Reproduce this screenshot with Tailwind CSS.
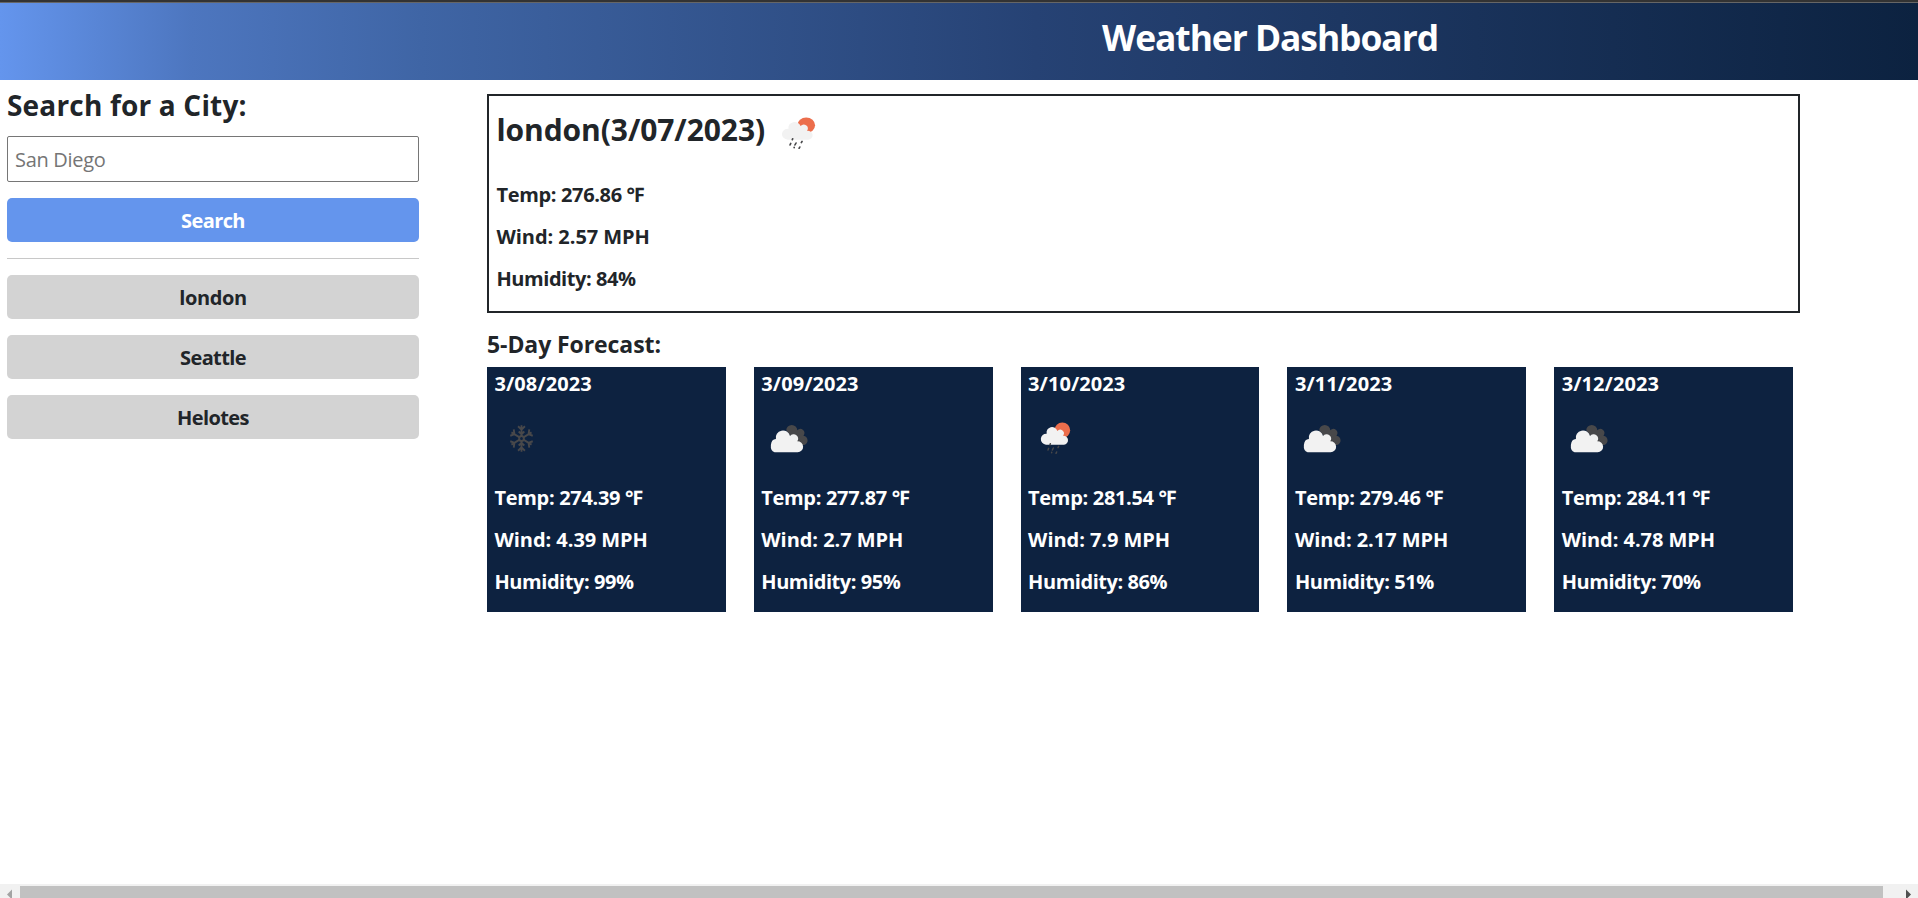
<!DOCTYPE html>
<html lang="en">
<head>
<meta charset="utf-8">
<title>Weather Dashboard</title>
<script src="https://cdn.jsdelivr.net/npm/@tailwindcss/browser@4"></script>
</head>
<body class="h-screen overflow-hidden flex flex-col bg-white text-[#212529] font-['Open_Sans','Noto_Sans',sans-serif] text-[20px] leading-[30px]">

<!-- Shared weather symbols -->
<svg class="hidden">
  <symbol id="rain" viewBox="90 186 93 99" preserveAspectRatio="none">
    <circle cx="157" cy="211" r="23.5" fill="#ec6e4c"/>
    <path fill="#f2f2f2" d="M108 254a15.500 15.500 0 0 1 2-33a16.500 16.500 0 0 1 32-8a11 11 0 0 1 17 14a13.500 13.500 0 0 1 3 27z"/>
    <path stroke="#48484a" stroke-width="4.500" stroke-linecap="round" d="M121 251l-1 3M116 265l-2 5M130 264l-3 6M146 259l-2 4M125 277v1M140 276l-2 4"/>
  </symbol>
  <symbol id="clouds" viewBox="86 192 122 90" preserveAspectRatio="none">
    <path fill="#48484a" d="M139 211a16 16 0 0 1 32 0a11 11 0 0 1 18 16a14.500 14.500 0 0 1 2 28h-20z"/>
    <path fill="#f2f2f2" d="M105 277a15.500 20.500 0 0 1 4-40a20 20 0 1 1 41-9a12 12 0 0 1 21 16a16.500 16.500 0 0 1 1 33z"/>
  </symbol>
  <symbol id="snow" viewBox="92 344 68 86">
    <g transform="translate(126 387) scale(.93 1)" fill="none" stroke="#48484a" stroke-width="6">
      <circle r="7.500"/>
      <path d="M0-7V-39M-11-36L0-26L11-36M-9-21L0-13L9-21"/>
      <path d="M0-7V-37M-11-35L0-26L11-35" transform="rotate(60)"/>
      <path d="M0-7V-37M-11-35L0-26L11-35" transform="rotate(120)"/>
      <path d="M0-7V-39M-11-36L0-26L11-36M-9-21L0-13L9-21" transform="rotate(180)"/>
      <path d="M0-7V-37M-11-35L0-26L11-35" transform="rotate(240)"/>
      <path d="M0-7V-37M-11-35L0-26L11-35" transform="rotate(300)"/>
    </g>
  </symbol>
</svg>

<div class="h-[3px] shrink-0 bg-[#333333] border-b border-[#666666]"></div>
<header class="h-[77px] shrink-0 pt-[10px] pl-[1102px] bg-[linear-gradient(to_right,#6495ed_0%,#4d76bf_10%,#3f65a5_22%,#264274_54%,#0c2240_100%)]">
  <h1 class="text-white font-bold text-[35.400px] leading-[48px] tracking-[-1.050px] whitespace-nowrap">Weather Dashboard</h1>
</header>

<main class="flex-1 flex items-start pl-[7px]">
  <aside class="w-[412px] flex flex-col pt-2">
    <h2 class="font-bold text-[28px] leading-[34px] tracking-[0.180px]">Search for a City:</h2>
    <input type="text" placeholder="San Diego" class="mt-[14px] h-[46px] px-[7px] border border-[#767676] rounded-[2px] tracking-[-0.300px] placeholder:text-[#757575]">
    <button class="mt-4 h-11 pt-[2px] rounded-[5px] bg-[#6495ed] text-white font-bold tracking-[-0.600px]">Search</button>
    <hr class="mt-4 border-t border-[#c8c8c8]">
    <div class="mt-4 flex flex-col gap-4 font-bold">
      <button class="h-11 pt-[2px] rounded-[5px] bg-[#d3d3d3] tracking-[-0.350px]">london</button>
      <button class="h-11 pt-[2px] rounded-[5px] bg-[#d3d3d3] tracking-[-0.600px]">Seattle</button>
      <button class="h-11 pt-[2px] rounded-[5px] bg-[#d3d3d3] tracking-[-0.600px]">Helotes</button>
    </div>
  </aside>

  <section class="ml-[68px] pt-[14px] font-bold">
    <div class="w-[1313px] h-[219px] border-2 border-[#212529] pl-[7.500px] pt-[16px]">
      <div class="flex">
        <h2 class="w-[284px] text-[30px] leading-[36px] tracking-[-0.080px] whitespace-nowrap">london(3/07/2023)</h2>
        <svg class="mt-[5px] w-[35px] h-[33px]"><use href="#rain"/></svg>
      </div>
      <div class="mt-[30px] flex flex-col gap-3">
        <p class="tracking-[-0.350px]">Temp: 276.86 ℉</p>
        <p class="tracking-[-0.050px]">Wind: 2.57 MPH</p>
        <p class="tracking-[-0.450px]">Humidity: 84%</p>
      </div>
    </div>

    <h3 class="mt-[17px] text-[23px] leading-[28px] tracking-[-0.080px]">5-Day Forecast:</h3>
    <div class="mt-[9px] w-[1306px] grid grid-cols-5 gap-[28px] text-white">
      <article class="h-[245px] bg-[#0d2240] pl-[7.500px] pt-[2px]">
        <p class="tracking-[0.080px]">3/08/2023</p>
        <div class="h-[84px] pt-[25px] pl-[15.500px]"><svg class="w-[23px] h-[29px]"><use href="#snow"/></svg></div>
        <div class="flex flex-col gap-3">
          <p class="tracking-[-0.320px]">Temp: 274.39 ℉</p>
          <p class="tracking-[-0.050px]">Wind: 4.39 MPH</p>
          <p class="tracking-[-0.450px]">Humidity: 99%</p>
        </div>
      </article>
      <article class="h-[245px] bg-[#0d2240] pl-[7.500px] pt-[2px]">
        <p class="tracking-[0.080px]">3/09/2023</p>
        <div class="h-[84px] pt-[25px] pl-[6.500px]"><svg class="w-[42px] h-[30px]"><use href="#clouds"/></svg></div>
        <div class="flex flex-col gap-3">
          <p class="tracking-[-0.320px]">Temp: 277.87 ℉</p>
          <p class="tracking-[-0.050px]">Wind: 2.7 MPH</p>
          <p class="tracking-[-0.450px]">Humidity: 95%</p>
        </div>
      </article>
      <article class="h-[245px] bg-[#0d2240] pl-[7.500px] pt-[2px]">
        <p class="tracking-[0.080px]">3/10/2023</p>
        <div class="h-[84px] pt-[23px] pl-[12px]"><svg class="w-[31px] h-[33px]"><use href="#rain"/></svg></div>
        <div class="flex flex-col gap-3">
          <p class="tracking-[-0.320px]">Temp: 281.54 ℉</p>
          <p class="tracking-[-0.050px]">Wind: 7.9 MPH</p>
          <p class="tracking-[-0.450px]">Humidity: 86%</p>
        </div>
      </article>
      <article class="h-[245px] bg-[#0d2240] pl-[7.500px] pt-[2px]">
        <p class="tracking-[0.080px]">3/11/2023</p>
        <div class="h-[84px] pt-[25px] pl-[6.500px]"><svg class="w-[42px] h-[30px]"><use href="#clouds"/></svg></div>
        <div class="flex flex-col gap-3">
          <p class="tracking-[-0.320px]">Temp: 279.46 ℉</p>
          <p class="tracking-[-0.050px]">Wind: 2.17 MPH</p>
          <p class="tracking-[-0.450px]">Humidity: 51%</p>
        </div>
      </article>
      <article class="h-[245px] bg-[#0d2240] pl-[7.500px] pt-[2px]">
        <p class="tracking-[0.080px]">3/12/2023</p>
        <div class="h-[84px] pt-[25px] pl-[6.500px]"><svg class="w-[42px] h-[30px]"><use href="#clouds"/></svg></div>
        <div class="flex flex-col gap-3">
          <p class="tracking-[-0.320px]">Temp: 284.11 ℉</p>
          <p class="tracking-[-0.050px]">Wind: 4.78 MPH</p>
          <p class="tracking-[-0.450px]">Humidity: 70%</p>
        </div>
      </article>
    </div>
  </section>
</main>

<!-- Horizontal scrollbar -->
<div class="h-[14px] shrink-0 flex pt-[2px] bg-[#f1f1f1]">
  <svg class="w-[20px] h-[12px]" viewBox="0 0 20 12"><path fill="#a3a3a3" d="M7 8.500L12 3.500V12H10.500z"/></svg>
  <div class="w-[1863px] h-[12px] bg-[#c1c1c1]"></div>
  <svg class="w-[35px] h-[12px]" viewBox="0 0 35 12"><path fill="#505050" d="M28 8.500L23 3.500V12H24.500z"/></svg>
</div>
</body>
</html>
